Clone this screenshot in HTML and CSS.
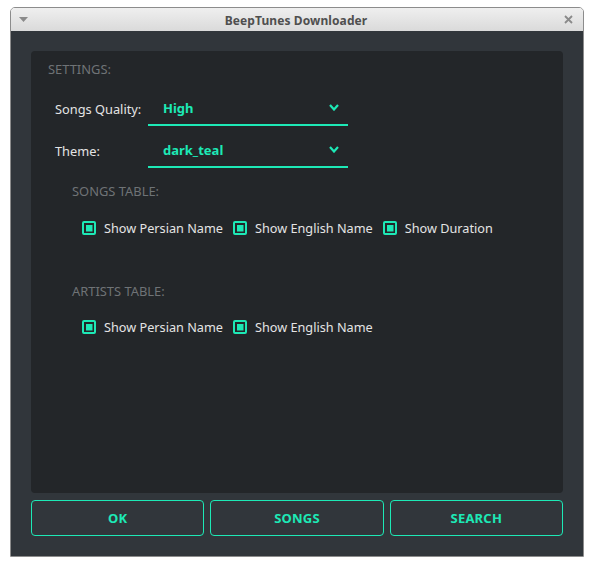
FILE: index.html
```html
<!DOCTYPE html>
<html>
<head>
<meta charset="utf-8">
<link rel="stylesheet" href="styles.css">
</head>
<body>
<div class="window">
  <div class="titlebar">
    <svg class="menu-arrow" width="9" height="6" viewBox="0 0 9 6"><polygon points="0,0 9,0 4.5,5" fill="#8a8a8a"/></svg>
    <span class="title">BeepTunes Downloader</span>
    <svg class="close" width="9" height="9" viewBox="0 0 9 9"><path d="M1 1 L8 8 M8 1 L1 8" stroke="#8a8a8a" stroke-width="1.8"/></svg>
  </div>
  <div class="body">
    <div class="panel">
      <div class="section-title">SETTINGS:</div>
      <div class="form">
        <div class="form-row">
          <span class="label">Songs Quality:</span>
          <div class="combo"><span class="combo-value">High</span>
            <svg class="chev" width="10" height="7" viewBox="0 0 10 7"><polyline points="1,1 5,5.5 9,1" fill="none" stroke="#1de9b6" stroke-width="2.2"/></svg>
          </div>
        </div>
        <div class="form-row">
          <span class="label">Theme:</span>
          <div class="combo"><span class="combo-value">dark_teal</span>
            <svg class="chev" width="10" height="7" viewBox="0 0 10 7"><polyline points="1,1 5,5.5 9,1" fill="none" stroke="#1de9b6" stroke-width="2.2"/></svg>
          </div>
        </div>
      </div>
      <div class="group">
        <div class="section-title">SONGS TABLE:</div>
        <div class="checks">
          <label class="check"><span class="box"></span>Show Persian Name</label>
          <label class="check"><span class="box"></span>Show English Name</label>
          <label class="check"><span class="box"></span>Show Duration</label>
        </div>
      </div>
      <div class="group group-artists">
        <div class="section-title">ARTISTS TABLE:</div>
        <div class="checks">
          <label class="check"><span class="box"></span>Show Persian Name</label>
          <label class="check"><span class="box"></span>Show English Name</label>
        </div>
      </div>
    </div>
    <div class="buttons">
      <button class="btn">OK</button>
      <button class="btn">SONGS</button>
      <button class="btn">SEARCH</button>
    </div>
  </div>
</div>
</body>
</html>
```

FILE: styles.css
```css
html, body {
  margin: 0;
  padding: 0;
  background: #ffffff;
  font-family: "Noto Sans", "Open Sans", sans-serif;
}
.window {
  margin: 7px 0 0 10px;
  width: 574px;
  height: 550px;
  box-sizing: border-box;
  border: 1px solid #8c8c8c;
  border-radius: 5px 5px 0 0;
  display: flex;
  flex-direction: column;
  overflow: hidden;
}
.titlebar {
  height: 23px;
  flex: none;
  background: linear-gradient(#efefef, #dadada);
  display: flex;
  align-items: center;
  justify-content: space-between;
  padding: 0 10px 0 8px;
}
.title {
  font-weight: bold;
  font-size: 12px;
  color: #4f4f4f;
  letter-spacing: 0.1px;
  margin-top: 1px;
}
.menu-arrow { margin-top: 1px; }
.close { margin-top: 0; }
.body {
  flex: 1;
  background: #31363b;
  padding: 20px 20px 20px 20px;
  display: flex;
  flex-direction: column;
  gap: 7px;
}
.panel {
  flex: 1;
  background: #232629;
  border-radius: 4px;
  padding: 10px 17px;
}
.section-title {
  font-size: 12.9px;
  line-height: 16px;
  color: #6f7376;
}
.form {
  margin: 15px 0 0 7px;
  display: flex;
  flex-direction: column;
  gap: 8px;
}
.form-row {
  display: flex;
  align-items: center;
}
.label {
  width: 93px;
  font-size: 12.8px;
  color: #e4e4e4;
  margin-top: 0;
}
.combo {
  height: 32px;
  border-bottom: 2px solid #1de9b6;
  display: flex;
  align-items: center;
  justify-content: space-between;
  padding: 0 9px 0 15px;
  box-sizing: content-box;
}
.form-row .combo { width: 176px; }
.combo-value {
  font-size: 13px;
  font-weight: bold;
  color: #1de9b6;
  margin-top: -1px;
}
.chev { margin-top: -1px; }
.group {
  margin: 15px 0 0 24px;
}
.group-artists { margin-top: 45px; }
.checks {
  display: flex;
  gap: 10px;
  margin: 19px 0 0 10px;
  height: 20px;
  align-items: center;
}
.group-artists .checks { margin-top: 18px; }
.check {
  display: flex;
  align-items: center;
  font-size: 12.7px;
  color: #e4e4e4;
}
.box {
  width: 14px;
  height: 14px;
  box-sizing: border-box;
  border: 2px solid #1de9b6;
  border-radius: 2px;
  padding: 1.5px;
  margin-right: 8px;
  background: #1de9b6;
  background-clip: content-box;
  box-shadow: inset 0 0 0 1.5px #232629;
}
.buttons {
  display: flex;
  gap: 6px;
  height: 36px;
  flex: none;
}
.btn {
  flex: 1;
  background: transparent;
  border: 1px solid #1de9b6;
  border-radius: 4px;
  color: #1de9b6;
  font-family: "Noto Sans", "Open Sans", sans-serif;
  font-weight: bold;
  font-size: 13px;
  letter-spacing: 0.2px;
  padding: 0;
}
```
